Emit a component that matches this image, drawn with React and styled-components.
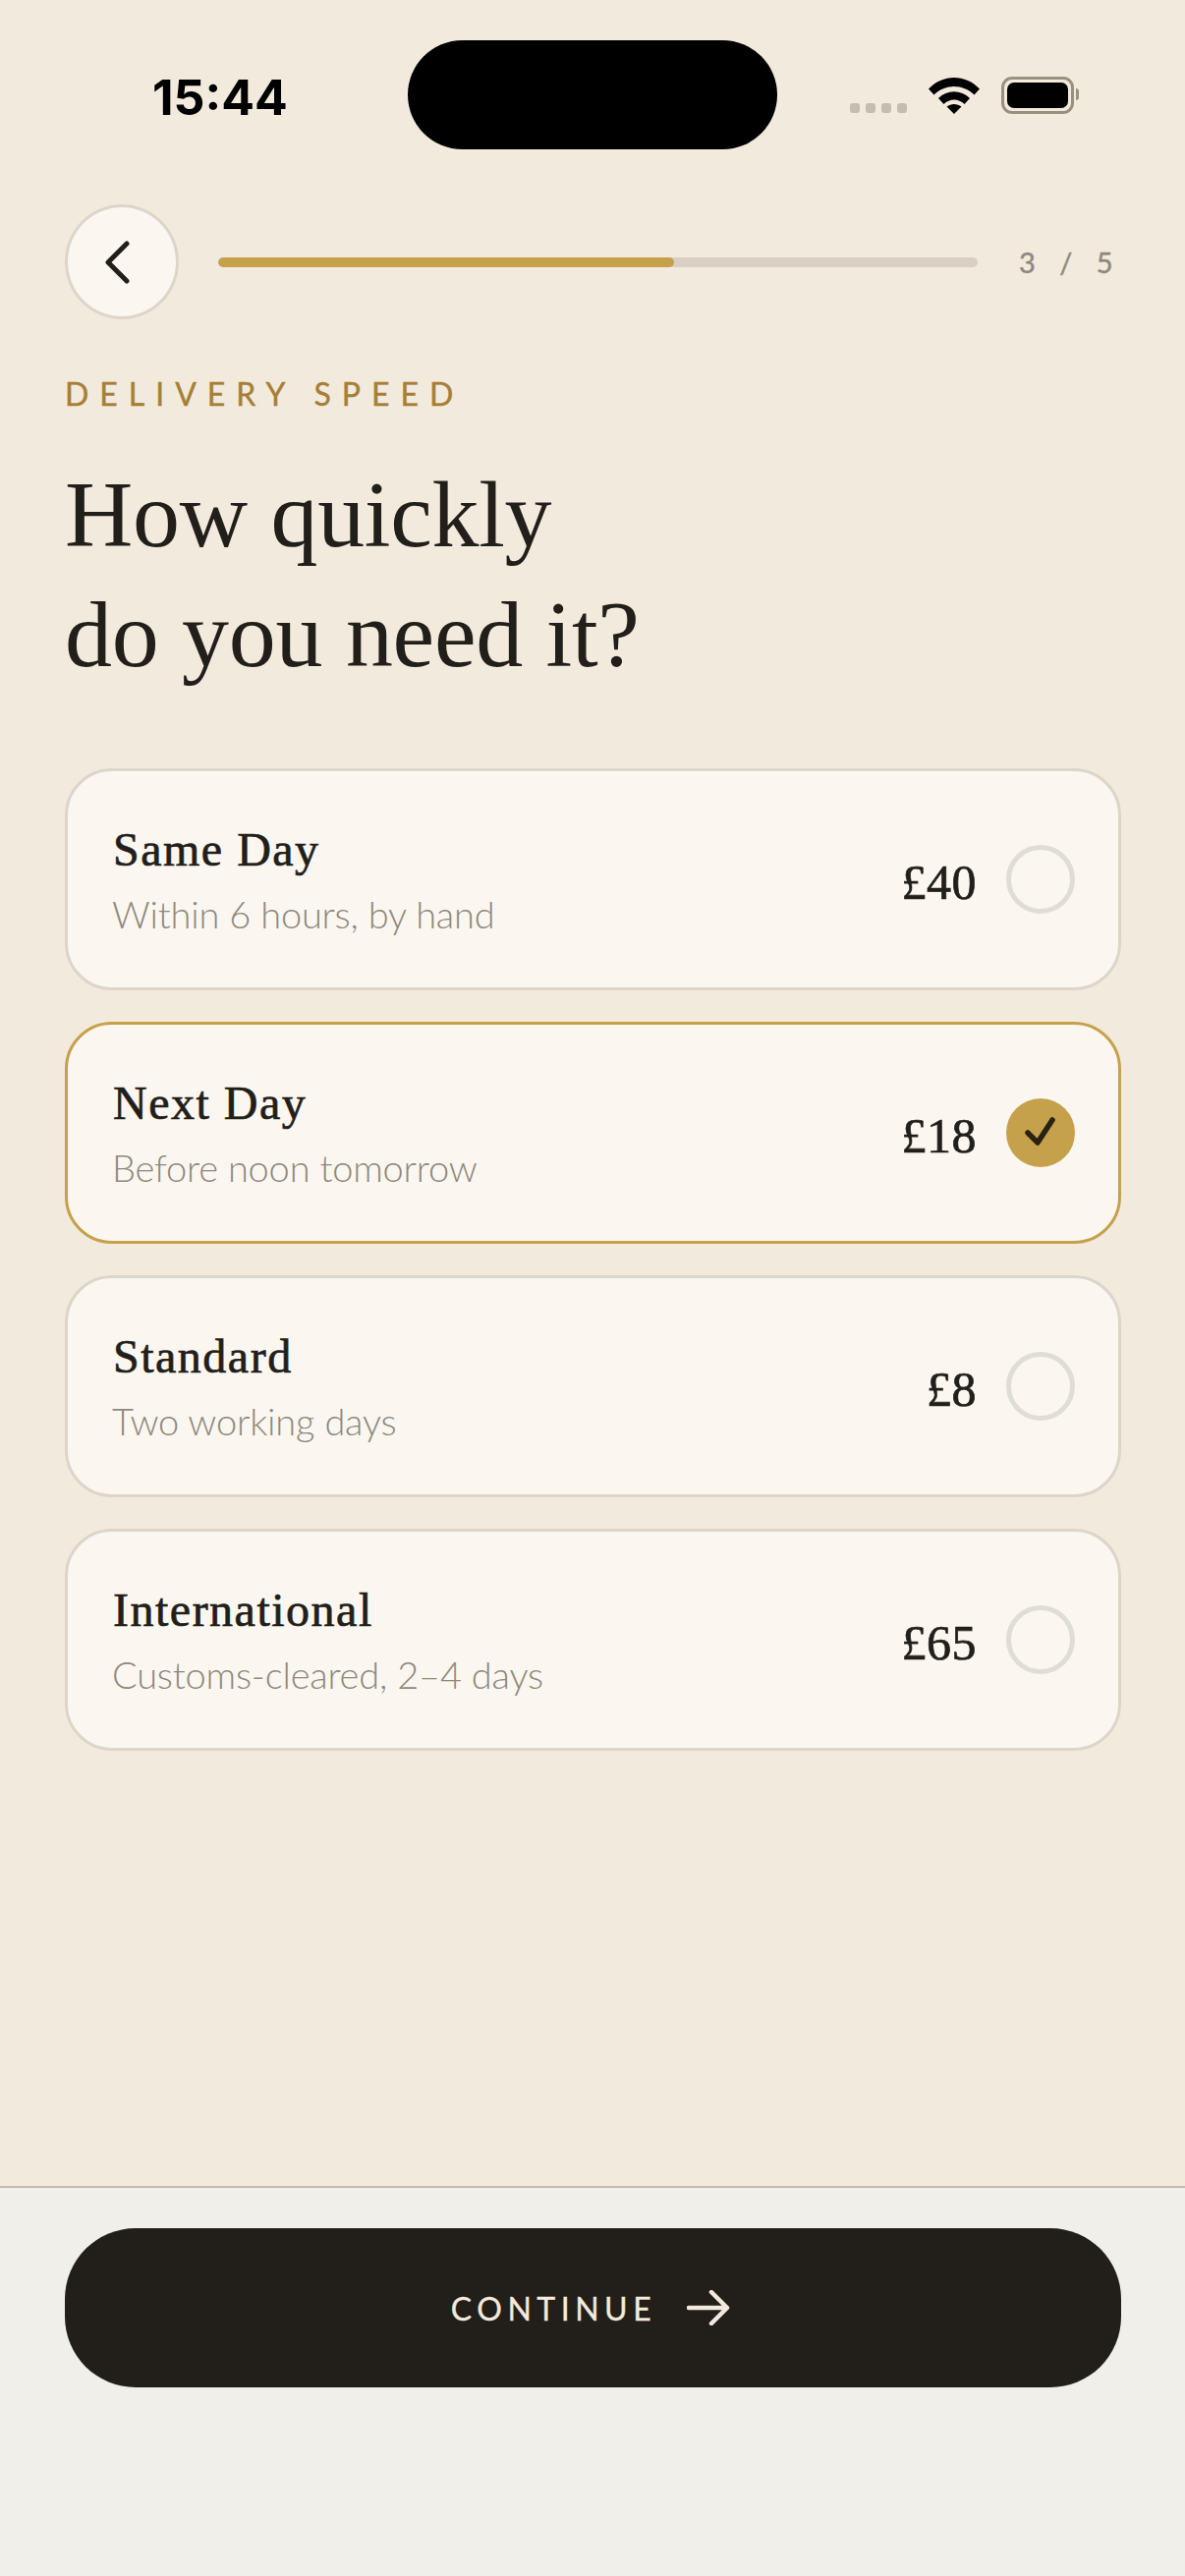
import React from 'react';
import styled, { createGlobalStyle } from 'styled-components';

const options = [
    { name: 'Same Day', note: 'Within 6 hours, by hand', price: '£40' },
    { name: 'Next Day', note: 'Before noon tomorrow', price: '£18', selected: true },
    { name: 'Standard', note: 'Two working days', price: '£8' },
    { name: 'International', note: 'Customs-cleared, 2–4 days', price: '£65' },
];

const App = () => {
    return (
        <>
            <GlobalStyle />
            <Screen>
                <Main>
                    <StatusBar>
                        <Time>15:44</Time>
                        <Island />
                        <StatusIcons>
                            <SignalDots>
                                <span /><span /><span /><span />
                            </SignalDots>
                            <svg width="52" height="38" viewBox="0 0 52 38">
                                <path d="M0 12.5 C14 -3 38 -3 52 12.5 L46.5 18.5 C35 7 17 7 5.5 18.5 Z" fill="#000" />
                                <path d="M10 22 C19 13 33 13 42 22 L36.5 28 C30.5 22 21.5 22 15.5 28 Z" fill="#000" />
                                <path d="M18.5 30.5 C23 27 29 27 33.5 30.5 L26 38 Z" fill="#000" />
                            </svg>
                            <Battery>
                                <BatteryFill />
                            </Battery>
                        </StatusIcons>
                    </StatusBar>

                    <TopRow>
                        <BackButton aria-label="Back">
                            <svg width="28" height="44" viewBox="0 0 28 44" fill="none">
                                <path d="M22 3 L3 22 L22 41" stroke="#221e1a" strokeWidth="5" strokeLinecap="round" strokeLinejoin="round" />
                            </svg>
                        </BackButton>
                        <Track>
                            <TrackFill style={{ width: `${(3 / 5) * 100}%` }} />
                        </Track>
                        <StepCount>3 / 5</StepCount>
                    </TopRow>

                    <Eyebrow>DELIVERY SPEED</Eyebrow>
                    <Heading>How quickly<br />do you need it?</Heading>

                    <OptionList>
                        {options.map((option) => (
                            <OptionCard key={option.name} $selected={option.selected}>
                                <OptionText>
                                    <OptionName>{option.name}</OptionName>
                                    <OptionNote>{option.note}</OptionNote>
                                </OptionText>
                                <Price>{option.price}</Price>
                                <Radio $selected={option.selected}>
                                    {option.selected && (
                                        <svg width="34" height="34" viewBox="0 0 34 34" fill="none">
                                            <path d="M4 17 L14 27 L29 4" stroke="#2a2210" strokeWidth="5.5" strokeLinecap="round" strokeLinejoin="round" />
                                        </svg>
                                    )}
                                </Radio>
                            </OptionCard>
                        ))}
                    </OptionList>
                </Main>

                <Footer>
                    <ContinueButton>
                        <span>CONTINUE</span>
                        <svg width="44" height="36" viewBox="0 0 44 36" fill="none">
                            <path d="M2 18 H41 M25 2 L41 18 L25 34" stroke="#f2eadd" strokeWidth="4.5" strokeLinecap="round" strokeLinejoin="round" />
                        </svg>
                    </ContinueButton>
                </Footer>
            </Screen>
        </>
    );
}

const GlobalStyle = createGlobalStyle`
    html, body {
        margin: 0;
        padding: 0;
        background: #f2eadd;
    }
`

const Screen = styled.div`
    width: 1206px;
    height: 2622px;
    display: flex;
    flex-direction: column;
    background: #f2eadd;
    overflow: hidden;
`

const Main = styled.main`
    flex: 1;
    padding: 41px 65px 0 66px;
`

const StatusBar = styled.div`
    height: 111px;
    margin-left: 89px;
    display: flex;
    align-items: center;
`

const Time = styled.div`
    width: 260px;
    font: 700 50px "Inter", sans-serif;
    color: #000;
    position: relative;
    top: 2px;
`

const Island = styled.div`
    width: 376px;
    height: 111px;
    border-radius: 56px;
    background: #000;
`

const StatusIcons = styled.div`
    margin-left: 74px;
    display: flex;
    align-items: center;
`

const SignalDots = styled.div`
    display: flex;
    gap: 6px;
    margin: 26px 22px 0 0;

    span {
        width: 10px;
        height: 10px;
        border-radius: 3px;
        background: #c4bdb2;
    }
`

const Battery = styled.div`
    width: 74px;
    height: 38px;
    margin-left: 22px;
    padding: 3px;
    box-sizing: border-box;
    border: 3px solid #98917f;
    border-radius: 11px;
    position: relative;

    &::after {
        content: '';
        position: absolute;
        right: -8px;
        top: 9px;
        width: 3px;
        height: 12px;
        border-radius: 0 3px 3px 0;
        background: #98917f;
    }
`

const BatteryFill = styled.div`
    height: 100%;
    border-radius: 7px;
    background: #000;
`

const TopRow = styled.div`
    margin-top: 56px;
    display: flex;
    align-items: center;
`

const BackButton = styled.button`
    width: 116px;
    height: 117px;
    padding: 0;
    flex: none;
    display: flex;
    align-items: center;
    justify-content: center;
    box-sizing: border-box;
    border: 3px solid #dcd5ca;
    border-radius: 50%;
    background: #fbf7f0;

    svg {
        margin-right: 6px;
    }
`

const Track = styled.div`
    width: 773px;
    height: 10px;
    margin-left: 40px;
    border-radius: 5px;
    background: #d9d0c3;
    overflow: hidden;
`

const TrackFill = styled.div`
    height: 100%;
    border-radius: 5px;
    background: #c6a14c;
`

const StepCount = styled.div`
    margin-left: 42px;
    font: 400 29px "Lato", sans-serif;
    -webkit-text-stroke: 0.4px #8f887c;
    letter-spacing: 6.5px;
    word-spacing: 4px;
    white-space: nowrap;
    color: #8f887c;
`

const Eyebrow = styled.div`
    margin-top: 56px;
    font: 400 32px/40px "Lato", sans-serif;
    -webkit-text-stroke: 0.4px #a67f34;
    letter-spacing: 11px;
    color: #a67f34;
`

const Heading = styled.h1`
    margin: 42px 0 0;
    font: 400 96px/122px "Liberation Serif", serif;
    letter-spacing: -0.3px;
    color: #221e1a;
`

const OptionList = styled.div`
    margin-top: 75px;
    display: flex;
    flex-direction: column;
    gap: 32px;
`

const OptionCard = styled.div`
    height: 226px;
    padding: 0 44px 0 46px;
    box-sizing: border-box;
    display: flex;
    align-items: center;
    border: 3px solid ${(props) => (props.$selected ? '#c6a14c' : '#dcd5ca')};
    border-radius: 48px;
    background: #fbf7f0;
`

const OptionText = styled.div`
    flex: 1;
    min-width: 0;
`

const OptionName = styled.div`
    font: 400 48px/58px "Liberation Serif", serif;
    -webkit-text-stroke: 0.7px #221e1a;
    letter-spacing: 1.5px;
    color: #221e1a;
`

const OptionNote = styled.div`
    margin: 12px 0 0 -1px;
    font: 300 38px/48px "Lato", sans-serif;
    letter-spacing: -0.2px;
    color: #8f887c;
`

const Price = styled.div`
    margin-right: 30px;
    padding-top: 6px;
    font: 400 50px/62px "Liberation Serif", serif;
    -webkit-text-stroke: 0.7px #221e1a;
    letter-spacing: 0.5px;
    color: #221e1a;
`

const Radio = styled.div`
    width: 70px;
    height: 70px;
    flex: none;
    box-sizing: border-box;
    display: flex;
    align-items: center;
    justify-content: center;
    border-radius: 50%;
    border: ${(props) => (props.$selected ? 'none' : '5px solid #e0dcd6')};
    background: ${(props) => (props.$selected ? '#c6a14c' : 'transparent')};
`

const Footer = styled.footer`
    height: 397px;
    padding: 41px 65px 0 66px;
    box-sizing: border-box;
    border-top: 2px solid #c2bdb3;
    background: #f1efe9;
`

const ContinueButton = styled.button`
    width: 100%;
    height: 162px;
    padding: 0 5px 0 0;
    border: none;
    border-radius: 72px;
    display: flex;
    align-items: center;
    justify-content: center;
    gap: 31px;
    background: #221e1a;
    font: 400 32px "Lato", sans-serif;
    -webkit-text-stroke: 0.3px #f2eadd;
    letter-spacing: 5.5px;
    color: #f2eadd;
`

export default App;
